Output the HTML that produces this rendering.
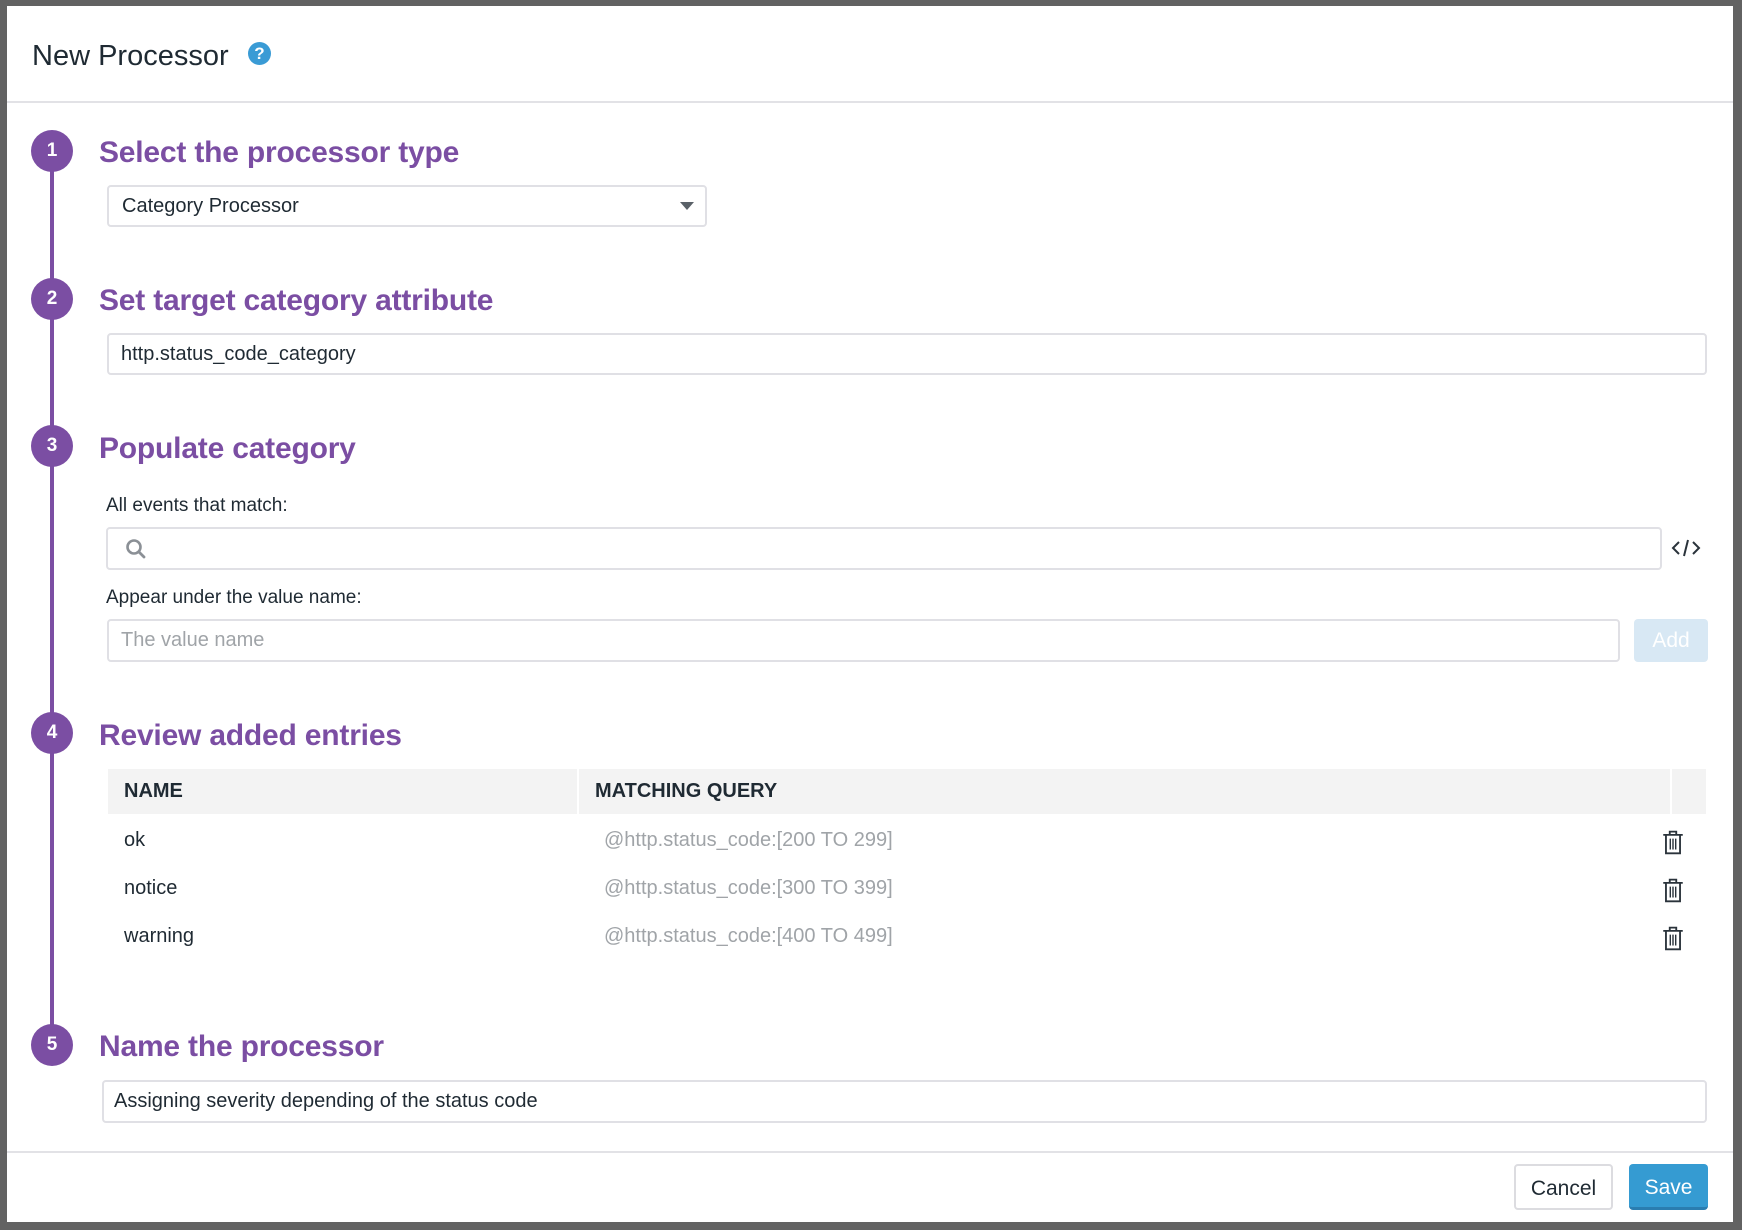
<!DOCTYPE html>
<html><head><meta charset="utf-8"><style>
*{box-sizing:border-box;margin:0;padding:0}
body{width:1742px;height:1230px;background:#626262;position:relative;overflow:hidden;font-family:"Liberation Sans",sans-serif;color:#1f2a33}
.modal{position:absolute;left:7px;top:6px;width:1726px;height:1216px;background:#fff}
.a{position:absolute}
.title{left:25px;top:34px;font-size:29px;color:#1f2a33}
.help{left:241px;top:36px;width:23px;height:23px;border-radius:50%;background:#3a9bd5;color:#fff;font-weight:bold;font-size:17px;text-align:center;line-height:23px}
.hr{left:0;height:2px;width:1726px;background:#e2e2e6}
.vline{left:43px;top:145px;width:4px;height:900px;background:#7b4ea3}
.circ{left:24px;width:42px;height:42px;border-radius:50%;background:#7b4ea3;color:#fff;font-weight:bold;font-size:19px;text-align:center;line-height:42px}
.h{left:92px;font-size:30px;font-weight:bold;color:#7b4ea3;letter-spacing:-0.2px}
.inp{border:2px solid #e0e0e5;border-radius:4px;background:#fff;font-size:20px;color:#1f2a33;padding-left:12px;display:flex;align-items:center}
.lbl{font-size:19px;color:#1f2a33}
.th{background:#f3f3f3;height:45px;top:763px;font-weight:bold;font-size:20px;display:flex;align-items:center}
.cell{font-size:20px}
.q{font-size:20px;color:#a0a4a8}
.btn{border-radius:4px;font-size:21px;display:flex;align-items:center;justify-content:center}
</style></head><body>
<div class="modal">
<div class="a title">New Processor</div>
<div class="a help">?</div>
<div class="a hr" style="top:95px"></div>
<div class="a vline"></div>
<div class="a circ" style="top:124px">1</div>
<div class="a circ" style="top:272px">2</div>
<div class="a circ" style="top:419px">3</div>
<div class="a circ" style="top:706px">4</div>
<div class="a circ" style="top:1018px">5</div>

<div class="a h" style="top:130px">Select the processor type</div>
<div class="a inp" style="left:100px;top:179px;width:600px;height:42px;padding-left:13px">Category Processor
<svg style="position:absolute;right:11px;top:15px" width="14" height="9"><path d="M0 0H14L7 8Z" fill="#5a6168"/></svg></div>

<div class="a h" style="top:278px">Set target category attribute</div>
<div class="a inp" style="left:100px;top:327px;width:1600px;height:42px">http.status_code_category</div>

<div class="a h" style="top:426px">Populate category</div>
<div class="a lbl" style="left:99px;top:489px">All events that match:</div>
<div class="a inp" style="left:99px;top:521px;width:1556px;height:43px">
<svg width="24" height="24" viewBox="0 0 24 24" style="margin-left:4px"><circle cx="10" cy="10" r="6.5" fill="none" stroke="#8b9096" stroke-width="2.6"/><path d="M15 15L20 20" stroke="#8b9096" stroke-width="2.8" stroke-linecap="round"/></svg></div>
<svg class="a" style="left:1664px;top:530px" width="30" height="24" viewBox="0 0 30 24"><path d="M8 6L2 12L8 18M22 6L28 12L22 18M17 4L13 20" fill="none" stroke="#2a333b" stroke-width="2"/></svg>
<div class="a lbl" style="left:99px;top:581px">Appear under the value name:</div>
<div class="a inp" style="left:100px;top:613px;width:1513px;height:43px;color:#a0a4a8">The value name</div>
<div class="a btn" style="left:1627px;top:613px;width:74px;height:43px;background:#d8e8f4;color:#fff">Add</div>

<div class="a h" style="top:713px">Review added entries</div>
<div class="a th" style="left:101px;width:469px;padding-left:16px">NAME</div>
<div class="a th" style="left:572px;width:1091px;padding-left:16px">MATCHING QUERY</div>
<div class="a th" style="left:1665px;width:34px"></div>
<div class="a cell" style="left:117px;top:823px">ok</div>
<div class="a cell" style="left:117px;top:871px">notice</div>
<div class="a cell" style="left:117px;top:919px">warning</div>
<div class="a q" style="left:597px;top:823px">@http.status_code:[200 TO 299]</div>
<div class="a q" style="left:597px;top:871px">@http.status_code:[300 TO 399]</div>
<div class="a q" style="left:597px;top:919px">@http.status_code:[400 TO 499]</div>
<svg class="a" style="left:1654px;top:824px" width="24" height="26" viewBox="0 0 22 24"><g fill="none" stroke="#2a333b" stroke-width="1.7"><path d="M2 4.5H20M8 4.5V1.5H14V4.5M4.5 4.5V21.5H17.5V4.5"/><path d="M8.5 8V18M11 8V18M13.5 8V18" stroke-width="1.3"/></g></svg>
<svg class="a" style="left:1654px;top:872px" width="24" height="26" viewBox="0 0 22 24"><g fill="none" stroke="#2a333b" stroke-width="1.7"><path d="M2 4.5H20M8 4.5V1.5H14V4.5M4.5 4.5V21.5H17.5V4.5"/><path d="M8.5 8V18M11 8V18M13.5 8V18" stroke-width="1.3"/></g></svg>
<svg class="a" style="left:1654px;top:920px" width="24" height="26" viewBox="0 0 22 24"><g fill="none" stroke="#2a333b" stroke-width="1.7"><path d="M2 4.5H20M8 4.5V1.5H14V4.5M4.5 4.5V21.5H17.5V4.5"/><path d="M8.5 8V18M11 8V18M13.5 8V18" stroke-width="1.3"/></g></svg>

<div class="a h" style="top:1024px">Name the processor</div>
<div class="a inp" style="left:95px;top:1074px;width:1605px;height:43px;padding-left:10px">Assigning severity depending of the status code</div>

<div class="a hr" style="top:1145px"></div>
<div class="a btn" style="left:1507px;top:1158px;width:99px;height:46px;border:2px solid #dcdce0;color:#1f2a33;padding-top:3px">Cancel</div>
<div class="a btn" style="left:1622px;top:1158px;width:79px;height:46px;background:#359bd2;border-bottom:3px solid #2a7db0;color:#fff;padding-top:5px">Save</div>
</div>
</body></html>
